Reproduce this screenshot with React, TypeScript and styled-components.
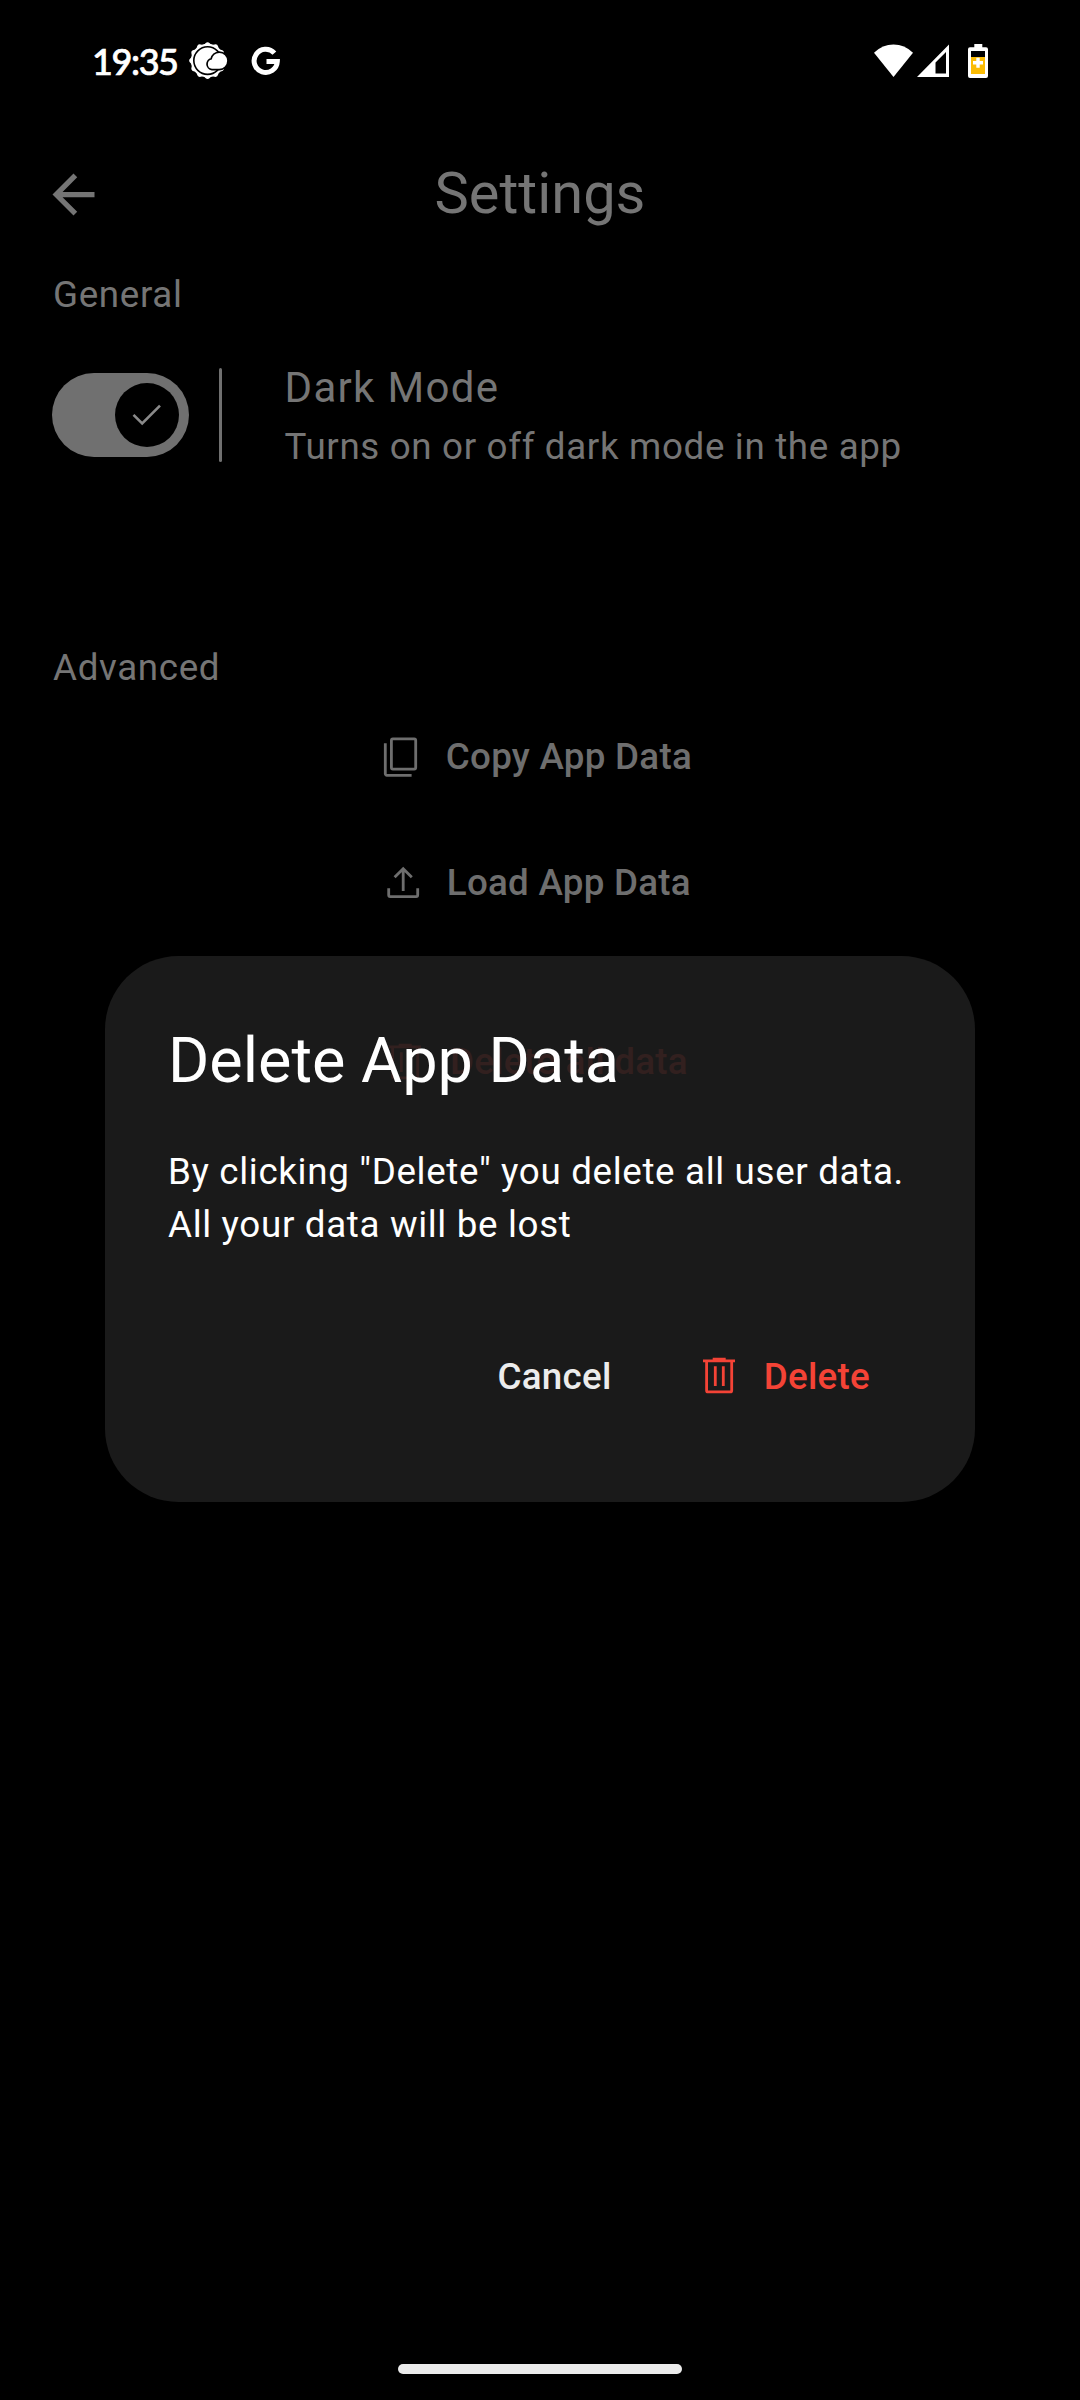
import React from "react";
import styled, { createGlobalStyle } from "styled-components";

const GlobalStyle = createGlobalStyle`
  body { margin: 0; background: #000; }
  * { box-sizing: border-box; }
`;

const Screen = styled.div`
  position: relative;
  display: flex;
  flex-direction: column;
  width: 1080px;
  height: 2400px;
  background: #000;
  color: #757575;
  font-family: Roboto, "Liberation Sans", sans-serif;
  overflow: hidden;
`;

const StatusBar = styled.header`
  display: flex;
  align-items: center;
  justify-content: space-between;
  flex: none;
  height: 122px;
  padding: 0 91px 0 92px;
`;

const StatusGroup = styled.div`
  display: flex;
  align-items: center;
`;

const Clock = styled.span`
  width: 94px;
  color: #fff;
  font: 500 36px/48px Lato, Roboto, sans-serif;
  letter-spacing: -1.4px;
  -webkit-text-stroke: 0.7px #fff;
  white-space: nowrap;
`;

const Glyph = styled.svg<{ $gap?: number }>`
  display: block;
  flex: none;
  margin-left: ${(p) => p.$gap ?? 0}px;
`;

const AppBar = styled.div`
  display: grid;
  grid-template-columns: 147px 1fr 147px;
  align-items: center;
  flex: none;
  height: 144px;
`;

const BackButton = styled.button`
  display: flex;
  padding: 0 0 0 42px;
  border: 0;
  background: none;
  color: inherit;
`;

const AppTitle = styled.h1`
  margin: 0;
  padding-bottom: 2px;
  text-align: center;
  font-size: 57.75px;
  font-weight: 400;
  line-height: 74px;
`;

const Content = styled.main`
  display: flex;
  flex-direction: column;
  padding-top: 3px;
`;

const SectionLabel = styled.h2`
  margin: 0;
  padding-left: 53px;
  font-size: 36.75px;
  font-weight: 400;
  line-height: 52.5px;
  letter-spacing: 0.656px;
`;

const SettingRow = styled.div`
  display: flex;
  align-items: center;
  margin: 35px 0 169px;
  padding-left: 52px;
`;

const Switch = styled.div`
  display: flex;
  align-items: center;
  justify-content: flex-end;
  width: 137px;
  height: 84px;
  padding-right: 10px;
  border-radius: 42px;
  background: #707070;
`;

const Thumb = styled.div`
  display: grid;
  place-items: center;
  width: 64px;
  height: 64px;
  border-radius: 50%;
  background: #000;
  color: #8a8a8a;
`;

const Divider = styled.div`
  width: 3px;
  height: 94px;
  margin: 0 62.5px 0 30px;
  border-radius: 2px;
  background: #707070;
`;

const SettingText = styled.div`
  display: flex;
  flex-direction: column;
`;

const SettingTitle = styled.span`
  font-size: 42px;
  line-height: 61px;
  letter-spacing: 1.3125px;
`;

const SettingHint = styled.span`
  margin-top: 2px;
  font-size: 36.75px;
  line-height: 53.5px;
  letter-spacing: 0.656px;
`;

const ActionList = styled.div`
  display: flex;
  flex-direction: column;
  align-items: center;
  margin-top: -1px;
`;

const TextButton = styled.button<{ $tone: string; $plain?: boolean; $top?: number }>`
  display: flex;
  align-items: center;
  gap: 22px;
  height: 126px;
  margin: ${(p) => p.$top ?? 0}px 0 0;
  padding: ${(p) => (p.$plain ? "0 31.5px" : "0 42px 0 30.5px")};
  border: 0;
  background: none;
  color: ${(p) => p.$tone};
  font: 500 36.75px/52.5px Roboto, "Liberation Sans", sans-serif;
  letter-spacing: 0.2625px;
  white-space: nowrap;
`;

const ButtonLabel = styled.span`
  padding-top: 2px;
`;

const Overlay = styled.div`
  position: absolute;
  inset: 122px 0 64px;
  display: flex;
  align-items: center;
  justify-content: center;
`;

const Dialog = styled.section`
  width: 870px;
  height: 546px;
  padding: 63px;
  border-radius: 73.5px;
  background: rgba(29, 29, 29, 0.9);
`;

const DialogTitle = styled.h2`
  margin: 0 0 43px;
  color: #fff;
  font-size: 63px;
  font-weight: 400;
  line-height: 84px;
`;

const DialogBody = styled.p`
  margin: 0;
  color: #fff;
  font-size: 36.75px;
  line-height: 52.5px;
  letter-spacing: 0.656px;
  white-space: nowrap;
`;

const DialogActions = styled.div`
  display: flex;
  justify-content: flex-end;
  gap: 21px;
  margin-top: 62px;
`;

const NavHandle = styled.div`
  width: 284px;
  height: 10px;
  margin: auto auto 26px;
  flex: none;
  border-radius: 5px;
  background: #ebebeb;
`;

const WeatherIcon = () => (
  <Glyph width="40" height="40" viewBox="0 0 40 40" $gap={1.5}>
    <g fill="#fff">
      {[0, 30, 60].map((a) => (
        <rect key={a} x="5.800" y="5.800" width="27.600" height="27.600" rx="3" transform={`rotate(${a + 45} 19.6 19.6)`} />
      ))}
      <circle cx="19.600" cy="19.600" r="16.800" />
    </g>
    <circle cx="19.600" cy="19.600" r="13.800" fill="#fff" stroke="#000" strokeWidth="1.600" />
    <path
      d="M24 27.700a4.700 4.700 0 0 1-.2-9.300A8 8 0 0 1 31.300 12A7.850 7.850 0 0 1 31.300 27.700z"
      fill="#fff"
      stroke="#000"
      strokeWidth="3.400"
      paintOrder="stroke"
    />
  </Glyph>
);

const GoogleIcon = () => (
  <Glyph width="30" height="30" viewBox="0 0 30 30" $gap={23.5}>
    <path d="M23.400 7.200A11.600 11.600 0 1 0 26.300 15.600H15.500" fill="none" stroke="#fff" strokeWidth="5" />
  </Glyph>
);

const WifiIcon = () => (
  <Glyph width="40" height="34" viewBox="0 0 40 34">
    <path d="M0 8.700Q8.500 0.500 19.500 0.500T39 8.700L19.500 33z" fill="#fff" />
  </Glyph>
);

const SignalIcon = () => (
  <Glyph width="33" height="34" viewBox="0 0 33 34" $gap={3}>
    <path d="M0 33L32 0.500V33zM18.500 18.500V29.500H29V8z" fill="#fff" fillRule="evenodd" />
  </Glyph>
);

const BatteryIcon = () => (
  <Glyph width="21" height="34" viewBox="0 0 21 34" $gap={18}>
    <path d="M6.300 0h8v3.300H18a2 2 0 0 1 2 2V32a2 2 0 0 1-2 2H2a2 2 0 0 1-2-2V5.300a2 2 0 0 1 2-2h4.300z" fill="#fff" />
    <path d="M3 7h14v6H3z" fill="#000" />
    <path d="M3 13h14v17H3z" fill="#fbbc04" />
    <path d="M8.300 13.700h3.400v3.300H15v3.400h-3.300v3.400H8.300v-3.400H5V17h3.300z" fill="#fff" />
  </Glyph>
);

const BackIcon = () => (
  <Glyph width="63" height="63" viewBox="0 0 24 24">
    <path d="M20 11H7.830l5.590-5.590L12 4l-8 8 8 8 1.410-1.410L7.830 13H20v-2z" fill="currentColor" />
  </Glyph>
);

const CheckIcon = () => (
  <Glyph width="42" height="42" viewBox="0 0 42 42">
    <path d="M7.500 20.800L16.200 29.500L34 11.700" fill="none" stroke="currentColor" strokeWidth="2.600" />
  </Glyph>
);

const Icon = ({ children }: { children: React.ReactNode }) => (
  <Glyph width="47.25" height="47.25" viewBox="0 0 47.25 47.25">
    <g fill="none" stroke="currentColor" strokeWidth="2.800">
      {children}
    </g>
  </Glyph>
);

const CopyIcon = () => (
  <Icon>
    <rect x="14.400" y="5.900" width="24.300" height="30.200" rx="1.500" />
    <path d="M8.300 10.300V40.800a1.500 1.500 0 0 0 1.500 1.500H34.600" />
  </Icon>
);

const UploadIcon = () => (
  <Icon>
    <path d="M10.700 29.200V36.100a1.500 1.500 0 0 0 1.500 1.500H38.200a1.500 1.500 0 0 0 1.500-1.500V29.200M25.200 32V10.500M16.600 18.300L25.200 9.700L33.800 18.300" />
  </Icon>
);

const TrashIcon = () => (
  <Icon>
    <path d="M8 8.900H40M17.700 7.200H30.700M11.600 9.500V38.400a1.500 1.500 0 0 0 1.500 1.500H35.200a1.500 1.500 0 0 0 1.500-1.500V9.500M20.300 14.200V34M28.300 14.200V34" />
  </Icon>
);

export default function App() {
  return (
    <Screen>
      <GlobalStyle />
      <StatusBar>
        <StatusGroup>
          <Clock>19:35</Clock>
          <WeatherIcon />
          <GoogleIcon />
        </StatusGroup>
        <StatusGroup>
          <WifiIcon />
          <SignalIcon />
          <BatteryIcon />
        </StatusGroup>
      </StatusBar>
      <AppBar>
        <BackButton aria-label="Back">
          <BackIcon />
        </BackButton>
        <AppTitle>Settings</AppTitle>
      </AppBar>
      <Content>
        <SectionLabel>General</SectionLabel>
        <SettingRow>
          <Switch>
            <Thumb>
              <CheckIcon />
            </Thumb>
          </Switch>
          <Divider />
          <SettingText>
            <SettingTitle>Dark Mode</SettingTitle>
            <SettingHint>Turns on or off dark mode in the app</SettingHint>
          </SettingText>
        </SettingRow>
        <SectionLabel>Advanced</SectionLabel>
        <ActionList>
          <TextButton $tone="#6e6e6e">
            <CopyIcon />
            <ButtonLabel>Copy App Data</ButtonLabel>
          </TextButton>
          <TextButton $tone="#6e6e6e">
            <UploadIcon />
            <ButtonLabel>Load App Data</ButtonLabel>
          </TextButton>
          <TextButton $tone="#f44336" $top={53}>
            <TrashIcon />
            <ButtonLabel>Delete all data</ButtonLabel>
          </TextButton>
        </ActionList>
      </Content>
      <NavHandle />
      <Overlay>
        <Dialog>
          <DialogTitle>Delete App Data</DialogTitle>
          <DialogBody>
            By clicking "Delete" you delete all user data.
            <br />
            All your data will be lost
          </DialogBody>
          <DialogActions>
            <TextButton $tone="#ececec" $plain>
              <ButtonLabel>Cancel</ButtonLabel>
            </TextButton>
            <TextButton $tone="#f44336">
              <TrashIcon />
              <ButtonLabel>Delete</ButtonLabel>
            </TextButton>
          </DialogActions>
        </Dialog>
      </Overlay>
    </Screen>
  );
}
